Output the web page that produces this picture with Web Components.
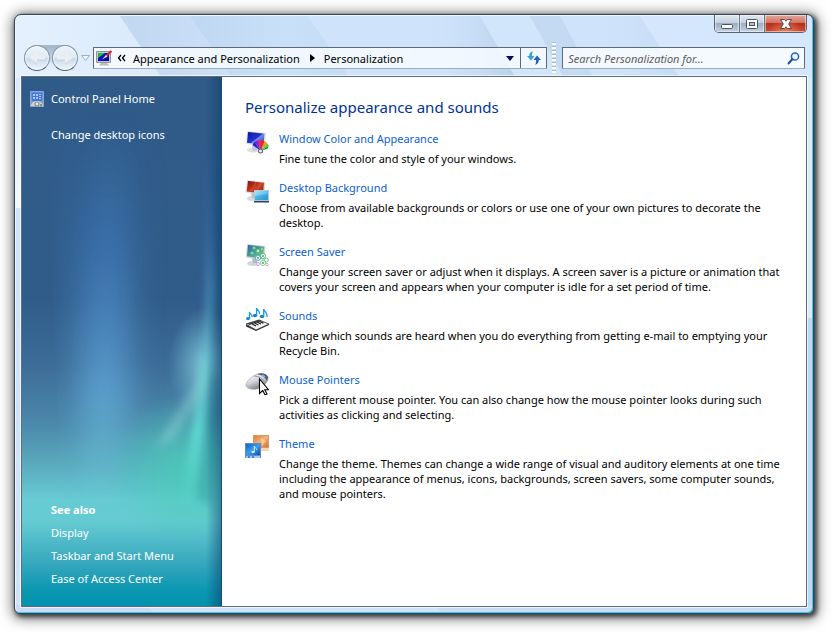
<!DOCTYPE html>
<html lang="en">
<head>
<meta charset="utf-8">
<title>Personalization</title>
<style>
  body {
    margin: 0; padding: 14px 18px 18px 14px; box-sizing: border-box; min-height: 100vh;
    display: flex; background: #fff; color: #000;
    font: 11px/15px "Noto Sans", "Open Sans", sans-serif;
  }
</style>
</head>
<body>
<glass-window>
  <caption-buttons slot="caption"></caption-buttons>
  <nav-buttons slot="nav"></nav-buttons>
  <address-bar slot="nav"></address-bar>
  <search-box slot="nav" hint="Search Personalization for..."></search-box>
  <task-sidebar slot="side">
    <side-link icon="panel">Control Panel Home</side-link>
    <side-link>Change desktop icons</side-link>
    <side-link slot="also">Display</side-link>
    <side-link slot="also">Taskbar and Start Menu</side-link>
    <side-link slot="also">Ease of Access Center</side-link>
  </task-sidebar>
  <settings-list heading="Personalize appearance and sounds">
    <settings-item icon="color" label="Window Color and Appearance">Fine tune the color and style of your windows.</settings-item>
    <settings-item icon="desktop" label="Desktop Background">Choose from available backgrounds or colors or use one of your own pictures to decorate the desktop.</settings-item>
    <settings-item icon="saver" label="Screen Saver">Change your screen saver or adjust when it displays. A screen saver is a picture or animation that covers your screen and appears when your computer is idle for a set period of time.</settings-item>
    <settings-item icon="sounds" label="Sounds">Change which sounds are heard when you do everything from getting e-mail to emptying your Recycle Bin.</settings-item>
    <settings-item icon="mouse" label="Mouse Pointers">Pick a different mouse pointer. You can also change how the mouse pointer looks during such activities as clicking and selecting.</settings-item>
    <settings-item icon="theme" label="Theme">Change the theme. Themes can change a wide range of visual and auditory elements at one time including the appearance of menus, icons, backgrounds, screen savers, some computer sounds, and mouse pointers.</settings-item>
  </settings-list>
</glass-window>

<script>
const ICONS = {
  panel: `<svg viewBox="0 0 16 16"><defs><linearGradient id="a" x2="0" y2="1"><stop stop-color="#5b8be4"/><stop offset="1" stop-color="#8d9fc4"/></linearGradient></defs>
    <path d="M1.500.500h13v15h-13z" fill="url(#a)" stroke="#8fa5d6"/><path d="M3 2h10v8H3z" fill="#4478dc"/>
    <g fill="#a9c8ff"><path d="M4 3h2v2H4zM7 3h2v2H7zM10 3h2v1h-2zM4 6h2v2H4zM7 6h2v2H7zM10 5h2v1h-2zM10 7h2v1h-2z"/></g>
    <path d="M2 15a6 5 0 0 1 12 0z" fill="#d3d3cc"/><circle cx="8" cy="13" r="2.600" fill="#8b8f8d"/><circle cx="8" cy="13" r="1.400" fill="#e8e8e8"/><path d="M11 13h2v2h-2z" fill="#58b64a"/></svg>`,
  color: `<svg viewBox="0 0 24 24"><defs><linearGradient id="a" x2="1" y2="1"><stop stop-color="#0b16a0"/><stop offset=".5" stop-color="#2236cf"/><stop offset=".55" stop-color="#6f8df2"/><stop offset="1" stop-color="#1a2bc0"/></linearGradient></defs>
    <ellipse cx="8" cy="20" rx="6" ry="2.500" fill="#dcdfe2"/><path d="M7 15l5 1v4l-4 1z" fill="#c3c7cc"/>
    <path d="M2 1l19 2-1 14L1 14z" fill="#dfe2e6"/><path d="M3 2l16.500 1.700-1 11.500L2 12.800z" fill="url(#a)"/>
    <path d="M16 21L7.500 15l2-3z" fill="#1b24d8"/><path d="M16 21L9.500 12l3-1.500z" fill="#7d22cf"/><path d="M16 21L12.500 10.500l3.500-.5z" fill="#e0218a"/><path d="M16 21l0-11 3.500 1z" fill="#e42a1a"/><path d="M16 21l3.500-10 2.500 2z" fill="#f59a16"/><path d="M16 21l6-8 1.700 2.500z" fill="#69c832"/><path d="M16 21l7.700-5.500-1 3z" fill="#149a48"/>
    <circle cx="15.500" cy="21" r="2.500" fill="#555b66"/><circle cx="15.500" cy="21" r="1.500" fill="#eef1f4"/></svg>`,
  desktop: `<svg viewBox="0 0 24 24"><defs><linearGradient id="a" x2="1" y2="1"><stop stop-color="#7a1108"/><stop offset=".55" stop-color="#cc3f26"/><stop offset="1" stop-color="#8e1a10"/></linearGradient><linearGradient id="b" x2="1" y2="1"><stop stop-color="#a8e6fb"/><stop offset="1" stop-color="#23a0dc"/></linearGradient></defs>
    <ellipse cx="7" cy="19.500" rx="5" ry="2.500" fill="#d6dade"/><path d="M6 14h5v5H7z" fill="#bcc1c6"/>
    <path d="M2 1l18.500 2-1 13L.5 13.500z" fill="#d9dcdf"/><path d="M3 2l16 1.700-1 11L1.700 12.500z" fill="url(#a)"/>
    <path d="M5 12c3-2 5-5 6-9m1 8c2-3 3-4 4-7" stroke="#e5694b" stroke-width=".6" fill="none"/>
    <path d="M9 11h15v12H9z" fill="#b5c7d4"/><path d="M10 12h13v9H10z" fill="url(#b)"/><path d="M10 17l13-2v6H10z" fill="#158ed0" opacity=".4"/><path d="M9 22h15v1.500H9z" fill="#33434f"/></svg>`,
  saver: `<svg viewBox="0 0 24 24"><defs><linearGradient id="a" x2="1" y2="1"><stop stop-color="#2f62a0"/><stop offset=".5" stop-color="#4b9f9c"/><stop offset="1" stop-color="#8fd08a"/></linearGradient></defs>
    <ellipse cx="8" cy="20.500" rx="6" ry="2.500" fill="#d3d7da"/><path d="M7 15h5v5H8z" fill="#b6bbc0"/>
    <path d="M2 1l18.500 2-1 14L1 14.500z" fill="#cfd3d6"/><path d="M3 2l16 1.700-1 12L2 13.300z" fill="url(#a)"/>
    <g fill="#bfeccb" stroke="#56ba6c" stroke-width=".8"><circle cx="9" cy="5" r="1.300"/><circle cx="13" cy="8" r="1.800"/><circle cx="7" cy="10" r="1.300"/><circle cx="17" cy="6" r="1.200"/></g>
    <g fill="#fff"><circle cx="13" cy="15" r="2.500" stroke="#54a8d8"/><circle cx="18" cy="13" r="2.500" stroke="#4cc362"/><circle cx="21.500" cy="17" r="2" stroke="#69c9a9"/><circle cx="18" cy="20" r="2.500" stroke="#7fd08f"/><circle cx="13" cy="21" r="1.500" stroke="#c5a5e2"/><circle cx="22" cy="21.500" r="1.200" stroke="#e0a0c0"/></g>
    <g fill="#3fae55"><circle cx="13" cy="15" r="1"/><circle cx="18" cy="13" r="1"/><circle cx="18" cy="20" r="1"/></g></svg>`,
  sounds: `<svg viewBox="0 0 24 24"><g fill="#1486cf"><ellipse cx="3" cy="11.500" rx="2" ry="1.500"/><ellipse cx="10" cy="8.500" rx="2.200" ry="1.700"/><ellipse cx="17" cy="9.500" rx="2.300" ry="1.800"/></g>
    <path d="M4.500 11.500V5c0 2 3 2 2.500 5M11.600 8.500V1c0 2.500 3.500 2.500 2.800 6M18.700 9.500V2c.3 3 4.300 3 3.300 8" fill="none" stroke="#1a9ae2" stroke-width="1.300"/>
    <path d="M1 17l13-4 10 4-13 6z" fill="#f4f4f4" stroke="#555"/><path d="M1 17.500v2l10 4.500 13-6v-1l-13 6z" fill="#30343a"/><path d="M2 16.500l12-3.700 3 1.100-12.500 4z" fill="#3b4047"/>
    <path d="M7 17l4 2M9.500 16l4 2M12 15l4 2M14.500 14.500l4 1.600" stroke="#222" stroke-width="1.300"/></svg>`,
  mouse: `<svg viewBox="0 0 24 24"><defs><linearGradient id="a" x2=".6" y2="1"><stop stop-color="#fff"/><stop offset=".5" stop-color="#d5d8dc"/><stop offset="1" stop-color="#6d747c"/></linearGradient></defs>
    <path d="M1 15c-1-3 4-8 9-11 5-2 12-1 13 2 1 4-3 8-8 11-5 2-12 2-14-2z" fill="url(#a)" stroke="#9aa0a6" stroke-width=".6"/>
    <path d="M12 3c5-2 10 0 11 3l-1 4c-2-4-5-6-10-7z" fill="#4b5870"/><path d="M17 4l3 2" stroke="#7fa9ed" stroke-width="2"/><path d="M9 5c5 0 9 3 11 7" fill="none" stroke="#8f969e"/>
    <path d="M14.500 8v14.500l3.300-3 2.200 4.500 2-1-2.200-4.300h3.700z" fill="#fff" stroke="#000" stroke-width="1.100"/></svg>`,
  theme: `<svg viewBox="0 0 24 24"><defs><linearGradient id="a" x2="1" y2="1"><stop stop-color="#e07a38"/><stop offset=".5" stop-color="#f5b57a"/><stop offset="1" stop-color="#d5702f"/></linearGradient><linearGradient id="b" x2="1" y2="1"><stop stop-color="#1262c4"/><stop offset=".5" stop-color="#3b9df0"/><stop offset="1" stop-color="#0d4fae"/></linearGradient></defs>
    <path d="M8 0h16v15H8z" fill="#d39a6c"/><path d="M9 1h14v11H9z" fill="url(#a)"/><path d="M16 3l5 3-4 5z" fill="#fbd6ae" opacity=".7"/><path d="M8 13h16v3H8z" fill="#f3d5bb"/>
    <path d="M0 8h16v15H0z" fill="#5d8fce"/><path d="M1 9h14v11H1z" fill="url(#b)"/><path d="M1 21h14v2H1z" fill="#a5c8ee"/><path d="M3 21h2v2H3zM7 21h2v2H7z" fill="#4c82c6"/>
    <ellipse cx="8" cy="17" rx="1.700" ry="1.300" fill="#d9ecff"/><path d="M9.300 17v-6c0 2 3 2 2.500 4" fill="none" stroke="#d9ecff"/></svg>`,
  place: `<svg viewBox="0 0 16 16"><path d="M.5 1.500h14v11H.5z" fill="#c5c9cd" stroke="#8d949b"/><path d="M2 3h11v8H2z" fill="#0712c4"/><path d="M2 3h7L2 8z" fill="#23c030"/><path d="M13 3v8H6z" fill="#0a0a8c"/><path d="M15.500 1L10 6" stroke="#d7262e" stroke-width="2"/><path d="M10 5l1.500 1.500L6 9.500z" fill="#e8eefc"/><path d="M5 13h6l2 2.500H3z" fill="#b9bdc1"/></svg>`
};

/* Gives every element an open shadow root filled from its markup. */
class Base extends HTMLElement {
  connectedCallback() {
    if (this.shadowRoot) return;
    const t = document.createElement('template');
    t.innerHTML = this.render();
    this.attachShadow({ mode: 'open' }).append(t.content.cloneNode(true));
  }
}
const define = (name, render) =>
  customElements.define(name, class extends Base { render() { return render(this); } });

define('glass-window', () => `
  <style>
    :host { flex: 1; min-width: 0; display: flex; flex-direction: column; box-sizing: border-box; position: relative; isolation: isolate;
      padding: 0 6px 6px; border: 1px solid #39414d; border-radius: 7px 7px 6px 6px; background: #cfe4fb;
      box-shadow: inset -1px -1px #2bcffa, inset 1px 1px #f4faff, 2px 2px 4px 1px rgba(0,0,0,.6), 1px 2px 13px 3px rgba(0,0,0,.5); }
    .streaks { position: absolute; z-index: -1; inset: 1px; overflow: hidden; border-radius: 6px; }
    .streaks svg { display: block; width: 100%; height: 100%; }
    header { display: flex; flex-direction: column; gap: 14px; padding-bottom: 7px; }
    nav { display: flex; align-items: center; height: 22px; padding: 0 2px 0 3px; }
    .client { flex: 1; display: flex; border: 1px solid #5d6d7c; background: #fff; box-shadow: 0 0 0 1px rgba(255,255,255,.65); }
    ::slotted([slot=caption]) { align-self: flex-end; }
  </style>
  <div class="streaks"><svg viewBox="0 0 796 596" preserveAspectRatio="none">
    <defs>
      <linearGradient id="l" x2="1" y2="0"><stop stop-color="#e4f0fd"/><stop offset="1" stop-color="#d9eafc"/></linearGradient>
      <linearGradient id="d" x2="1" y2="0"><stop stop-color="#c1d7f0"/><stop offset="1" stop-color="#cce1f8"/></linearGradient>
      <linearGradient id="g" x2="1" y2="0"><stop stop-color="#bfd7f0"/><stop offset=".6" stop-color="#c8e0f8"/><stop offset="1" stop-color="#c3dbf4"/></linearGradient>
      <linearGradient id="e" x2="1" y2="0"><stop stop-color="#cfe4fb" stop-opacity="0"/><stop offset="1" stop-color="#b9d0ea"/></linearGradient>
      <linearGradient id="f" x2="0" y2="1"><stop stop-color="#d9eafc"/><stop offset="1" stop-color="#f4f9ff"/></linearGradient>
    </defs>
    <path d="M0 0h104l42 62H0z" fill="url(#l)"/>
    <path d="M104 0h70l42 62h-70z" fill="url(#d)"/>
    <path d="M174 0h118l42 62H216z" fill="url(#g)"/>
    <path d="M400 0h64l36 62h-64z" fill="url(#e)"/>
    <path d="M464 0h50l34 62h-48z" fill="#d1e5fb"/>
    <path d="M514 0h30l34 62h-30z" fill="#c4daf3"/>
    <path d="M570 0h54l40 62h-54z" fill="url(#e)" opacity=".5"/>
    <path d="M624 0h172v62H664z" fill="#d5e7fc"/>
    <path d="M0 62h8v130H0z" fill="url(#f)"/>
    <path d="M788 62h8v240h-8z" fill="#dcebfc"/><path d="M788 302h8v290h-8z" fill="#bfd7f2"/>
    <path d="M0 589h130l8 8H0z" fill="#c8dcf5"/><path d="M420 589h376v7H424z" fill="#c8dcf5"/>
  </svg></div>
  <header><slot name="caption"></slot><nav><slot name="nav"></slot></nav></header>
  <div class="client"><slot name="side"></slot><slot></slot></div>`);

define('caption-buttons', () => `
  <style>
    :host { display: flex; height: 18px; box-sizing: border-box; border: 1px solid #5a6372; border-top: 0; border-radius: 0 0 5px 5px; overflow: hidden; }
    button { width: 25px; padding: 0; border: 0; border-right: 1px solid #6a7382; display: grid; place-items: center;
      background: linear-gradient(#e0e9f2, #c4d0de 45%, #9eaec1 50%, #c3d2e3); box-shadow: inset 0 0 0 1px rgba(255,255,255,.5); }
    .close { width: 41px; border: 0; background: radial-gradient(ellipse at 50% 110%, rgba(255,150,100,.7), transparent 60%), linear-gradient(#e3a79c, #cf7365 45%, #b42d19 50%, #c94c36); }
    svg { display: block; }
  </style>
  <button aria-label="Minimize"><svg width="14" height="14"><rect x="1.500" y="7.500" width="11" height="4" rx="1" fill="#fff" stroke="#4c5563"/></svg></button>
  <button aria-label="Maximize"><svg width="14" height="14"><rect x="1.500" y="2.500" width="11" height="9" rx="1" fill="#fff" stroke="#4c5563"/><rect x="4.500" y="5.500" width="5" height="3" fill="#b4c2d2" stroke="#4c5563"/></svg></button>
  <button class="close" aria-label="Close"><svg width="14" height="14"><path d="M1.500 2.500h4L7 4.300l1.500-1.800h4L9.700 7l2.800 4.500h-4L7 9.700l-1.500 1.800h-4L4.300 7z" fill="#fff" stroke="#5a4a55"/></svg></button>`);

define('nav-buttons', () => `
  <style>
    :host { display: flex; align-items: center; flex: none; margin-right: 3px; }
    .pair { display: flex; gap: 2px; border-radius: 14px; background: linear-gradient(#a5b9cd 0 2px, #c2d4e6 14px, transparent 20px); }
    button { padding: 0; border: 0; background: none; }
    .round { width: 26px; height: 26px; box-sizing: border-box; border: 1px solid #8496a8; border-bottom-color: #4d5f73; border-radius: 50%;
      background: linear-gradient(#edf3f9, #dfe9f2 48%, #cbdae8 52%, #eef6fd); box-shadow: inset 0 0 0 1px rgba(255,255,255,.7); }
    svg { display: block; }
    .round svg { width: 24px; height: 24px; }
    .more { padding: 1px 0 0 3px; }
  </style>
  <div class="pair">
    <button class="round" aria-label="Back"><svg viewBox="0 0 24 24"><path d="M4 12.500l8-6.500v4h8v5h-8v4z" fill="#c9d5e0"/><path d="M4 12l8-6.500v4h8v4h-8v4z" fill="#e9eff5"/></svg></button>
    <button class="round" aria-label="Forward"><svg viewBox="0 0 24 24"><path d="M20 12.500L12 6v4H4v5h8v4z" fill="#c9d5e0"/><path d="M20 12l-8-6.500v4H4v4h8v4z" fill="#e9eff5"/></svg></button>
  </div>
  <button class="more" aria-label="Recent pages"><svg width="9" height="7"><path d="M.5.500h8L4.500 5.500z" fill="#eef4fb" stroke="#9db0c5"/></svg></button>`);

define('address-bar', () => `
  <style>
    :host { flex: 1; min-width: 0; height: 22px; box-sizing: border-box; display: flex; border: 1px solid #5f6975; border-bottom-color: #9fabb9; border-radius: 1px; background: rgba(247,251,255,.85); }
    .path { flex: 1; display: flex; align-items: center; padding-left: 2px; white-space: nowrap; }
    a { color: #000; text-decoration: none; }
    .chev { margin: 0 7px 0 5px; }
    .sep { margin: 0 9px 0 10px; }
    svg { display: block; flex: none; }
    .place svg { width: 16px; height: 16px; }
    button { padding: 0; border: 0; background: none; display: grid; place-items: center; }
    .drop { width: 20px; }
    .refresh { width: 26px; border-left: 1px solid #5f6975; }
  </style>
  <div class="path">
    <span class="place">${ICONS.place}</span>
    <svg class="chev" width="9" height="8"><path d="M4 1L1.500 4 4 7M8 1L5.500 4 8 7" fill="none" stroke="#000" stroke-width="1.300"/></svg>
    <a href="#">Appearance and Personalization</a>
    <svg class="sep" width="5" height="8"><path d="M0 0v8l5-4z"/></svg>
    <a href="#">Personalization</a>
  </div>
  <button class="drop" aria-label="Previous locations"><svg width="8" height="5"><path d="M0 0h8L4 5z" fill="#06065e"/></svg></button>
  <button class="refresh" aria-label="Refresh"><svg width="16" height="16" viewBox="0 0 16 16"><path d="M7 1.500C4 1.500 3.300 4 3.300 6H1l4 4.500L8.500 6H6c0-2 0-3.500 1-4.500z" fill="#3c9ce0"/><path d="M9 14.500c3 0 3.700-2.500 3.700-4.500H15l-4-4.500L7.500 10H10c0 2 0 3.500-1 4.500z" fill="#2263b8"/></svg></button>`);

define('search-box', el => `
  <style>
    :host { display: flex; align-items: center; flex: none; width: 33%; box-sizing: border-box; }
    .grip { flex: none; width: 4px; height: 32px; margin: 0 6px 0 5px;
      background: linear-gradient(#fff, #fff) 1px 1px / 2px 2px, conic-gradient(#a3b4c8 0 0); background: repeating-linear-gradient(#a9b9cb 0 1px, #fff 1px 3px, transparent 3px 4px); }
    label { flex: 1; min-width: 0; height: 22px; box-sizing: border-box; display: flex; align-items: center; padding: 0 4px 0 5px; border: 1px solid #5f6975; border-bottom-color: #9fabb9; border-radius: 1px; background: rgba(250,253,255,.85); }
    input { flex: 1; min-width: 0; padding: 0; border: 0; outline: 0; background: none; font: inherit; }
    input::placeholder { color: #5c5c5c; font-style: italic; opacity: 1; }
    svg { display: block; flex: none; }
  </style>
  <span class="grip"></span>
  <label><input type="text" aria-label="${el.getAttribute('hint')}" placeholder="${el.getAttribute('hint')}">
    <svg width="13" height="13"><circle cx="8" cy="4.500" r="3.600" fill="#eaf5ff" stroke="#2a62b8" stroke-width="1.500"/><path d="M5.500 7L1.500 11.500" stroke="#1f4fa3" stroke-width="2" stroke-linecap="round"/></svg></label>`);

define('task-sidebar', () => `
  <style>
    :host { flex: none; width: 200px; box-sizing: border-box; display: flex; flex-direction: column; justify-content: space-between; position: relative; isolation: isolate;
      padding: 14px 7px 20px; border-right: 1px solid #20486d; color: #fff; }
    .aurora { position: absolute; z-index: -1; top: 0; left: 0; width: 100%; height: 100%; }
    .group { display: flex; flex-direction: column; gap: 20px; }
    .also { display: flex; flex-direction: column; gap: 8px; }
    h2 { margin: 0 0 0 22px; font: inherit; font-weight: bold; }
  </style>
  <svg class="aurora" viewBox="0 0 199 529" preserveAspectRatio="none">
    <defs>
      <linearGradient id="base" x2="0" y2="1">
        <stop stop-color="#305b89"/><stop offset=".42" stop-color="#305c89"/><stop offset=".55" stop-color="#3d6d98"/><stop offset=".66" stop-color="#4c8aab"/><stop offset=".73" stop-color="#5aa9bd"/><stop offset=".8" stop-color="#68cbd4"/><stop offset=".84" stop-color="#65cbd2"/><stop offset=".92" stop-color="#36a7bd"/><stop offset=".97" stop-color="#0b97b1"/><stop offset="1" stop-color="#0592ae"/>
      </linearGradient>
      <linearGradient id="beam" x2="0" y2="1"><stop stop-color="#3f76b2" stop-opacity="0"/><stop offset=".35" stop-color="#4079b8"/><stop offset=".7" stop-color="#62a9da"/><stop offset="1" stop-color="#75dde2" stop-opacity="0"/></linearGradient>
      <linearGradient id="right" x2="0" y2="1"><stop stop-color="#3a76b8" stop-opacity="0"/><stop offset=".3" stop-color="#3c78b8"/><stop offset=".55" stop-color="#5fb9cc"/><stop offset=".8" stop-color="#69e8de"/><stop offset="1" stop-color="#69e0dc" stop-opacity="0"/></linearGradient>
      <radialGradient id="teal"><stop stop-color="#48cdb6" stop-opacity=".8"/><stop offset=".5" stop-color="#48cdb6" stop-opacity=".45"/><stop offset="1" stop-color="#48c9b8" stop-opacity="0"/></radialGradient>
      <radialGradient id="glow"><stop stop-color="#90dce4" stop-opacity=".8"/><stop offset="1" stop-color="#70c0d8" stop-opacity="0"/></radialGradient>
      <linearGradient id="edge" x2="1" y2="0"><stop stop-color="#0b3c6b" stop-opacity="0"/><stop offset="1" stop-color="#0b3c6b" stop-opacity=".5"/></linearGradient>
      <filter id="b4" x="-50%" width="200%"><feGaussianBlur stdDeviation="4"/></filter>
      <filter id="b12" x="-60%" width="220%"><feGaussianBlur stdDeviation="14 8"/></filter>
      <clipPath id="clip"><path d="M22 0L40 440h160V0z"/></clipPath>
    </defs>
    <path d="M0 0h199v529H0z" fill="url(#base)"/>
    <g clip-path="url(#clip)"><path d="M40 40h80l-8 390H54z" fill="url(#beam)" opacity=".45" filter="url(#b12)"/>
    <path d="M78 40h22l-8 390H66z" fill="url(#beam)" opacity=".75" filter="url(#b12)"/></g>
    <ellipse cx="165" cy="392" rx="80" ry="75" fill="url(#teal)"/>
    <ellipse cx="182" cy="288" rx="36" ry="58" fill="url(#glow)"/>
    <path d="M188 50l6 160-16 220h-18l24-180z" fill="url(#right)" opacity=".8" filter="url(#b4)"/>
    <path d="M187 285L132 372l20-10 32-50z" fill="#9ad8da" opacity=".4" filter="url(#b4)"/>
    <path d="M188 283L174 420l16 10 9-120z" fill="#218b92" opacity=".35" filter="url(#b4)"/>
    <path d="M184 0h15v529h-15z" fill="url(#edge)"/>
  </svg>
  <div class="group"><slot></slot></div>
  <div class="also"><h2>See also</h2><slot name="also"></slot></div>`);

define('side-link', el => `
  <style>
    :host { display: block; }
    a { display: flex; align-items: flex-start; gap: 6px; color: #fff; text-decoration: none; padding-left: ${el.hasAttribute('icon') ? 0 : 22}px; }
    svg { display: block; width: 16px; height: 16px; }
  </style>
  <a href="#">${ICONS[el.getAttribute('icon')] || ''}<slot></slot></a>`);

define('settings-list', el => `
  <style>
    :host { flex: 1; min-width: 0; display: flex; flex-direction: column; gap: 14px; padding: 20px 14px 20px 23px; }
    h1 { margin: 0; font: 15px/20px "Noto Sans", "Open Sans", sans-serif; color: #003399; }
  </style>
  <h1>${el.getAttribute('heading')}</h1><slot></slot>`);

define('settings-item', el => `
  <style>
    :host { display: flex; align-items: flex-start; gap: 10px; }
    .icon { flex: none; width: 24px; margin: -1px 0; }
    svg { display: block; width: 24px; height: 24px; }
    div { flex: 1; min-width: 0; }
    a { display: table; color: #0b61cf; text-decoration: none; }
    p { margin: 5px 0 0; }
  </style>
  <span class="icon">${ICONS[el.getAttribute('icon')]}</span>
  <div><a href="#">${el.getAttribute('label')}</a><p><slot></slot></p></div>`);
</script>
</body>
</html>
